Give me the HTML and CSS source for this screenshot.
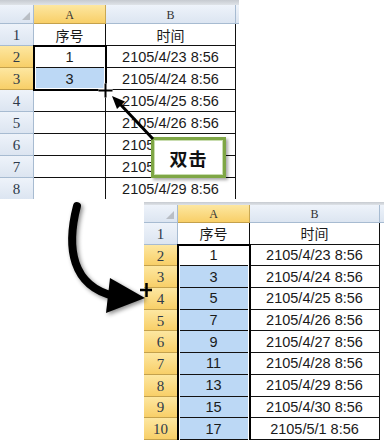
FILE: index.html
```html
<!DOCTYPE html>
<html>
<head>
<meta charset="utf-8">
<link rel="stylesheet" href="styles.css">
</head>
<body>
<div class="canvas">
  <div class="sheet sheet-top">
    <div class="strip"></div>
    <div class="grid">
      <div class="hd corner"><span class="tri"></span></div><div class="hd colh hl">A</div><div class="hd colh">B</div><div class="hd edge"></div>
      <div class="hd rowh">1</div><div class="c cjk">序号</div><div class="c cjk">时间</div><div class="edge-w"></div>
      <div class="hd rowh hl">2</div><div class="c">1</div><div class="c">2105/4/23 8:56</div><div class="edge-w"></div>
      <div class="hd rowh hl">3</div><div class="c sel">3</div><div class="c">2105/4/24 8:56</div><div class="edge-w"></div>
      <div class="hd rowh">4</div><div class="c"></div><div class="c">2105/4/25 8:56</div><div class="edge-w"></div>
      <div class="hd rowh">5</div><div class="c"></div><div class="c">2105/4/26 8:56</div><div class="edge-w"></div>
      <div class="hd rowh">6</div><div class="c"></div><div class="c">2105/4/27 8:56</div><div class="edge-w"></div>
      <div class="hd rowh">7</div><div class="c"></div><div class="c">2105/4/28 8:56</div><div class="edge-w"></div>
      <div class="hd rowh">8</div><div class="c"></div><div class="c">2105/4/29 8:56</div><div class="edge-w"></div>
    </div>
    <div class="selbox selbox-top"></div>
  </div>

  <div class="sheet sheet-bottom">
    <div class="strip"></div>
    <div class="grid">
      <div class="hd corner"><span class="tri"></span></div><div class="hd colh hl">A</div><div class="hd colh">B</div><div class="hd edge"></div>
      <div class="hd rowh">1</div><div class="c cjk">序号</div><div class="c cjk">时间</div><div class="edge-w"></div>
      <div class="hd rowh hl">2</div><div class="c">1</div><div class="c">2105/4/23 8:56</div><div class="edge-w"></div>
      <div class="hd rowh hl">3</div><div class="c sel">3</div><div class="c">2105/4/24 8:56</div><div class="edge-w"></div>
      <div class="hd rowh hl">4</div><div class="c sel">5</div><div class="c">2105/4/25 8:56</div><div class="edge-w"></div>
      <div class="hd rowh hl">5</div><div class="c sel">7</div><div class="c">2105/4/26 8:56</div><div class="edge-w"></div>
      <div class="hd rowh hl">6</div><div class="c sel">9</div><div class="c">2105/4/27 8:56</div><div class="edge-w"></div>
      <div class="hd rowh hl">7</div><div class="c sel">11</div><div class="c">2105/4/28 8:56</div><div class="edge-w"></div>
      <div class="hd rowh hl">8</div><div class="c sel">13</div><div class="c">2105/4/29 8:56</div><div class="edge-w"></div>
      <div class="hd rowh hl">9</div><div class="c sel">15</div><div class="c">2105/4/30 8:56</div><div class="edge-w"></div>
      <div class="hd rowh hl">10</div><div class="c sel">17</div><div class="c">2105/5/1 8:56</div><div class="edge-w"></div>
    </div>
    <div class="selbox selbox-bottom"></div>
  </div>

  <div class="callout">双击</div>

  <svg class="overlay" width="384" height="440" viewBox="0 0 384 440">
    <g class="shadowed">
      <path d="M77,206 C66,248 72,286 114,296" fill="none" stroke="#000" stroke-width="8" stroke-linecap="round"/>
      <polygon points="110,278 106,313 145,298" fill="#000"/>
    </g>
    <line x1="153" y1="139" x2="120" y2="104" stroke="#000" stroke-width="3"/>
    <polygon points="112,96 117,109 125,101.5" fill="#000"/>
    <g>
      <path d="M98.5,90.5 H112.5 M105.5,83.5 V97.5" stroke="#fff" stroke-width="4"/>
      <path d="M98.5,90.5 H112.5 M105.5,83.5 V97.5" stroke="#000" stroke-width="2"/>
    </g>
    <path d="M140,290 H152 M146.5,283 V297" stroke="#000" stroke-width="2.5"/>
  </svg>
</div>
</body>
</html>
```

FILE: styles.css
```css
* { box-sizing: border-box; margin: 0; padding: 0; }
html, body { width: 384px; height: 440px; overflow: hidden; background: #fff; }
body { margin: 0; font-family: "Liberation Sans", "Noto Sans CJK SC", sans-serif; color: #1a1a1a; }

.canvas { position: relative; width: 384px; height: 440px; overflow: hidden; background: #fff; }

.sheet { position: absolute; overflow: hidden; background: #fff; }
.sheet-top { left: 0; top: 0; width: 239px; height: 199px; }
.sheet-bottom { left: 144px; top: 202px; width: 240px; height: 238px; }

.strip { height: 5px; background: linear-gradient(#c6cad0, #dfe3e8); }
.sheet-bottom .strip { height: 3px; }

.grid { display: grid; grid-template-columns: 34px 72px 130px 8px; }
.sheet-top .grid { grid-template-rows: 19px; grid-auto-rows: 22px; }
.sheet-bottom .grid { grid-template-rows: 18px; grid-auto-rows: 21.7px; }

.hd {
  display: flex; align-items: center; justify-content: center;
  background: linear-gradient(#eef3fa, #dce5f1);
  border-right: 1px solid #a7bbd1; border-bottom: 1px solid #a7bbd1;
  font-family: "Liberation Serif", "DejaVu Serif", serif; color: #333;
}
.colh { font-size: 12px; padding-top: 2px; }
.rowh { font-size: 15px; padding-top: 2px; color: #2e3a4a; }
.hd.hl {
  background: linear-gradient(#fde7a1, #f8cf68);
  border-bottom-color: #c4a14c; border-right-color: #c9a853;
}
.corner { position: relative; }
.tri {
  position: absolute; right: 3px; bottom: 3px; width: 0; height: 0;
  border-left: 8px solid transparent; border-bottom: 8px solid #b9bec5;
}
.edge { border-right: none; background: linear-gradient(#eef3fa, #dce5f1); }
.edge-w { background: #fff; }

.c {
  display: flex; align-items: center; justify-content: center;
  background: #fff;
  border-right: 1px solid #111; border-bottom: 1px solid #111;
  font-size: 14.5px; color: #1a1a1a; white-space: nowrap;
}
.c.cjk { font-family: "Noto Sans CJK SC", sans-serif; font-size: 14px; }
.c.sel { background: #bcd8f5; }

.selbox {
  position: absolute; border: 2px solid #000;
  box-shadow: inset 0 0 0 1px #fff;
}
.selbox-top { left: 33px; top: 45px; width: 74px; height: 46px; }
.selbox-bottom { left: 33px; top: 42px; width: 74px; height: 300px; }

.callout {
  position: absolute; left: 151px; top: 137px; width: 75px; height: 41px;
  border: 3px solid #7ea645; background: #fff;
  box-shadow: 2px 2px 3px rgba(0,0,0,0.35), inset 0 0 0 1px #c9ddb0;
  display: flex; align-items: center; justify-content: center;
  font-family: "Noto Sans CJK SC", sans-serif; font-weight: 700; font-size: 18px; color: #111;
  letter-spacing: 1px;
}

.overlay { position: absolute; left: 0; top: 0; pointer-events: none; }
.shadowed { filter: drop-shadow(2px 2px 2px rgba(0,0,0,0.45)); }
```
